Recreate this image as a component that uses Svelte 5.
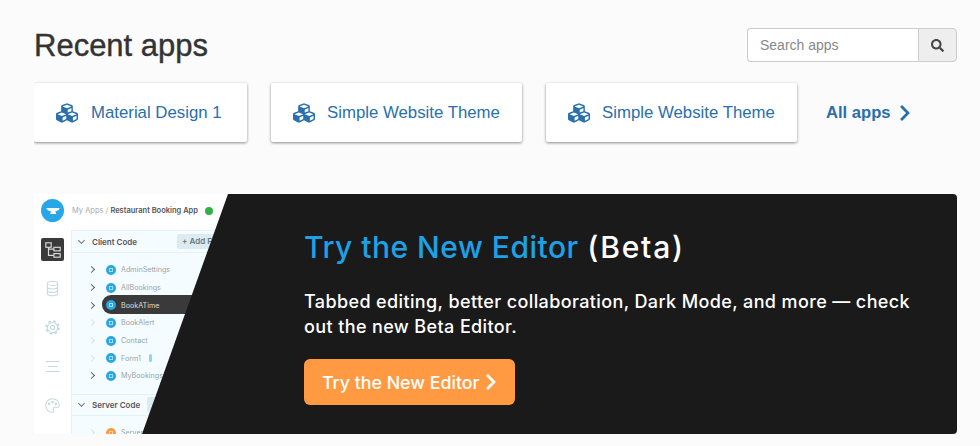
<script lang="ts">
	const apps = ['Material Design 1', 'Simple Website Theme', 'Simple Website Theme'];
	const cubes =
		'M488.6 250.2L392 214V105.5c0-15-9.3-28.4-23.4-33.7l-100-37.5c-8.1-3.1-17.1-3.1-25.3 0l-100 37.5c-14.1 5.3-23.4 18.7-23.4 33.7V214l-96.6 36.2C9.3 255.5 0 268.9 0 283.9V394c0 13.6 7.7 26.1 19.9 32.2l100 50c10.1 5.1 22.1 5.1 32.2 0l103.9-52 103.9 52c10.1 5.1 22.1 5.1 32.2 0l100-50c12.2-6.1 19.9-18.6 19.9-32.2V283.9c0-15-9.3-28.4-23.4-33.7zM358 214.8l-85 31.9v-68.2l85-37v73.3zM154 104.1l102-38.2 102 38.2v.6l-102 41.4-102-41.4v-.6zm84 291.1l-85 42.5v-79.1l85-38.8v75.4zm0-112l-102 41.4-102-41.4v-.6l102-38.2 102 38.2v.6zm240 112l-85 42.5v-79.1l85-38.8v75.4zm0-112l-102 41.4-102-41.4v-.6l102-38.2 102 38.2v.6z';
	const chevron =
		'M285.476 272.971L91.132 467.314c-9.373 9.373-24.569 9.373-33.941 0l-22.667-22.667c-9.357-9.357-9.375-24.522-.04-33.901L188.505 256 34.484 101.255c-9.335-9.379-9.317-24.544.04-33.901l22.667-22.667c9.373-9.373 24.569-9.373 33.941 0L285.475 239.03c9.373 9.372 9.373 24.568.001 33.941z';
	const search =
		'M505 442.7L405.3 343c-4.5-4.5-10.6-7-17-7H372c27.6-35.3 44-79.7 44-128C416 93.1 322.9 0 208 0S0 93.1 0 208s93.1 208 208 208c48.3 0 92.7-16.4 128-44v16.3c0 6.4 2.5 12.5 7 17l99.7 99.7c9.4 9.4 24.6 9.4 33.9 0l28.3-28.3c9.4-9.4 9.4-24.6.1-34zM208 336c-70.7 0-128-57.2-128-128 0-70.7 57.2-128 128-128 70.7 0 128 57.2 128 128 0 70.7-57.2 128-128 128z';

	const forms = [
		{ name: 'AdminSettings', arrow: true },
		{ name: 'AllBookings', arrow: true },
		{ name: 'BookATime', arrow: true, active: true },
		{ name: 'BookAlert', arrow: false },
		{ name: 'Contact', arrow: false },
		{ name: 'Form1', arrow: false, bolt: true },
		{ name: 'MyBookings', arrow: true }
	];
</script>

<div class="page">
	<header class="top">
		<h1>Recent apps</h1>
		<div class="search">
			<input type="text" placeholder="Search apps" />
			<button type="button" aria-label="Search">
				<svg viewBox="0 0 512 512" width="13" height="13"><path d={search} /></svg>
			</button>
		</div>
	</header>

	<div class="apps">
		{#each apps as app}
			<a class="card" href="#app">
				<svg class="cubes" viewBox="0 0 512 512" width="22" height="22"><path d={cubes} /></svg>
				<span>{app}</span>
			</a>
		{/each}
		<a class="all" href="#all">
			All apps
			<svg viewBox="0 0 320 512" width="12" height="18"><path d={chevron} /></svg>
		</a>
	</div>

	<section class="banner">
		<div class="mock" aria-hidden="true">
			<div class="mock-top">
				<span class="logo">
					<svg viewBox="0 0 24 24" width="18" height="18"><path d="M3 8h18c-1 3-4 4-6 4.500l1.500 3.500h-8.500l1.500-3.500C7 12 4 11 3 8z" /></svg>
				</span>
				<span class="crumb">My Apps / <b>Restaurant Booking App</b></span>
				<span class="ok"></span>
			</div>
			<div class="mock-body">
				<div class="rail">
					<span class="rail-on">
						<svg viewBox="0 0 20 20" width="18" height="18" fill="none" stroke="#d8d8d8" stroke-width="1.300">
							<rect x="2" y="2" width="6" height="5" /><rect x="11" y="7" width="7" height="4" /><rect x="11" y="14" width="7" height="4" /><path d="M5 7v9h6M5 9h6" />
						</svg>
					</span>
					<svg viewBox="0 0 20 20" width="17" height="17" fill="none" stroke="#c2d9df" stroke-width="1.200">
						<ellipse cx="10" cy="4" rx="6" ry="2.500" /><path d="M4 4v12c0 3.300 12 3.300 12 0V4M4 8c0 3.300 12 3.300 12 0M4 12c0 3.300 12 3.300 12 0" />
					</svg>
					<svg viewBox="0 0 20 20" width="17" height="17" fill="none" stroke="#c2d9df" stroke-width="1.200">
						<circle cx="10" cy="10" r="6" /><circle cx="10" cy="10" r="7.500" stroke-width="2" stroke-dasharray="3 2.900" /><circle cx="10" cy="10" r="2.500" />
					</svg>
					<svg viewBox="0 0 20 20" width="17" height="17" fill="none" stroke="#c2d9df" stroke-width="1.200">
						<path d="M2 4h16M5 10h11M2 16h16" />
					</svg>
					<svg viewBox="0 0 20 20" width="17" height="17" fill="none" stroke="#c2d9df" stroke-width="1.200">
						<path d="M10 2a8 8 0 1 0 0 16c2 0 2-2 1-3s0-3 2-3h3c2 0 2-2 2-3 0-4-4-7-8-7z" /><circle cx="6" cy="8" r="1" /><circle cx="10" cy="6" r="1" /><circle cx="14" cy="8" r="1" />
					</svg>
				</div>
				<div class="tree">
					<div class="tree-head">
						<i class="down"></i><b>Client Code</b><span class="add">+ Add Form</span>
					</div>
					<ul>
						{#each forms as form}
							<li class:active={form.active}>
								<i class="arrow" class:faint={!form.arrow}></i>
								<span class="dot"></span>
								<span class="name">{form.name}</span>
								{#if form.bolt}<span class="bolt"></span>{/if}
							</li>
						{/each}
					</ul>
					<div class="tree-head server">
						<i class="down"></i><b>Server Code</b><span class="add">+ Add</span>
					</div>
					<ul>
						<li><i class="arrow faint"></i><span class="dot orange"></span><span class="name">Server</span></li>
					</ul>
				</div>
			</div>
		</div>
		<div class="pitch">
			<h2><em>Try the New Editor</em> <span class="beta">(Beta)</span></h2>
			<p>Tabbed editing, better collaboration, Dark Mode, and more — check out the new Beta Editor.</p>
			<a class="cta" href="#editor">
				Try the New Editor
				<svg viewBox="0 0 320 512" width="12" height="18"><path d={chevron} /></svg>
			</a>
		</div>
	</section>
</div>

<style>
	:global(body) {
		background: #fbfbfb;
		font-family: 'Liberation Sans', Arial, sans-serif;
		overflow: hidden;
	}

	.page {
		display: flex;
		flex-direction: column;
		width: 923px;
		margin-left: 34px;
		height: 446px;
		overflow: hidden;
	}

	.top {
		display: flex;
		justify-content: space-between;
		align-items: flex-start;
		padding-top: 28px;
		height: 55px;
	}

	h1 {
		margin: 1px 0 0;
		font-size: 31px;
		font-weight: 400;
		line-height: 34px;
		color: #333;
		-webkit-text-stroke: 0.4px #333;
	}

	.search {
		display: flex;
		width: 210px;
		height: 34px;
		box-sizing: border-box;
	}

	.search input {
		flex: 1;
		min-width: 0;
		box-sizing: border-box;
		height: 34px;
		padding: 0 12px;
		border: 1px solid #ccc;
		border-right: 0;
		border-radius: 4px 0 0 4px;
		background: #fff;
		font: 14px 'Liberation Sans', Arial, sans-serif;
		color: #555;
	}

	.search input::placeholder {
		color: #888;
		opacity: 1;
	}

	.search button {
		width: 39px;
		height: 34px;
		box-sizing: border-box;
		display: flex;
		align-items: center;
		justify-content: center;
		padding: 0;
		border: 1px solid #ccc;
		border-radius: 0 4px 4px 0;
		background: #eee;
	}

	.search svg {
		fill: #444;
	}

	.apps {
		display: flex;
		align-items: center;
		gap: 24px;
		height: 59px;
	}

	.card {
		display: flex;
		align-items: center;
		gap: 12px;
		box-sizing: border-box;
		width: 251px;
		height: 59px;
		padding: 0 22px;
		background: #fff;
		border-radius: 2px;
		box-shadow: 0 1px 3px rgba(0, 0, 0, 0.45);
		color: #2a6fad;
		font-size: 16.800px;
		white-space: nowrap;
		text-decoration: none;
	}

	.card:first-child {
		width: 213px;
		gap: 13px;
	}

	.cubes {
		fill: #2a6fad;
		flex: none;
	}

	.all {
		display: flex;
		align-items: center;
		gap: 8px;
		margin-left: 5px;
		color: #2a6fad;
		font-size: 16.600px;
		font-weight: 700;
		text-decoration: none;
	}

	.all svg {
		fill: #2a6fad;
	}

	.banner {
		position: relative;
		display: flex;
		flex: none;
		height: 240px;
		margin-top: 52px;
		background: #1a1a1a;
		border-radius: 0 4px 4px 0;
		overflow: hidden;
	}

	/* screenshot of the editor, cut on the diagonal */
	.mock {
		position: absolute;
		inset: 0 auto 0 0;
		width: 194px;
		background: #fff;
		clip-path: polygon(0 0, 100% 0, 108px 100%, 0 100%);
		font-family: 'Inter', 'Noto Sans', sans-serif;
		color: #98a3a8;
		filter: blur(0.4px);
	}

	.mock-top {
		display: flex;
		align-items: center;
		gap: 8px;
		height: 36px;
		padding: 0 0 3px 7px;
		box-sizing: border-box;
		white-space: nowrap;
	}

	.logo {
		display: flex;
		align-items: center;
		justify-content: center;
		flex: none;
		width: 23px;
		height: 23px;
		border-radius: 50%;
		background: #27a6e8;
	}

	.logo svg {
		fill: #fff;
	}

	.crumb {
		font-size: 7.500px;
		color: #aaa;
	}

	.crumb b {
		color: #555;
		font-weight: 600;
	}

	.ok {
		flex: none;
		width: 8px;
		height: 8px;
		margin-left: -1px;
		border-radius: 50%;
		background: #2fb344;
	}

	.mock-body {
		display: flex;
		height: 204px;
	}

	.rail {
		display: flex;
		flex-direction: column;
		align-items: center;
		gap: 22px;
		flex: none;
		width: 37px;
		padding-top: 8px;
		box-sizing: border-box;
	}

	.rail svg {
		flex: none;
	}

	.rail-on {
		display: flex;
		align-items: center;
		justify-content: center;
		width: 23px;
		height: 23px;
		margin-bottom: -3px;
		border-radius: 2px;
		background: #3a3a3a;
	}

	.tree {
		flex: 1;
		min-width: 0;
		background: #f5fcff;
		border-left: 1px solid #e4f2f7;
		white-space: nowrap;
	}

	.tree-head {
		display: flex;
		align-items: center;
		gap: 7px;
		height: 21px;
		padding-left: 6px;
		border-top: 1px solid #e4f2f7;
		border-bottom: 1px solid #e4f2f7;
		font-size: 8px;
		color: #555;
	}

	.tree-head b {
		font-weight: 600;
	}

	.down {
		flex: none;
		width: 4px;
		height: 4px;
		margin: -2px 1px 0;
		border-right: 1px solid #777;
		border-bottom: 1px solid #777;
		transform: rotate(45deg);
	}

	.add {
		margin-left: 33px;
		padding: 0 5px;
		line-height: 15px;
		border-radius: 2px;
		background: #dcebf0;
		font-weight: 600;
		color: #66777f;
	}

	.server .add {
		margin-left: 0;
	}

	ul {
		list-style: none;
		margin: 0;
		padding: 8px 0 9px 17px;
	}

	li {
		position: relative;
		display: flex;
		align-items: center;
		gap: 5px;
		height: 17.700px;
		font-size: 7.200px;
	}

	li.active .name {
		color: #ddd;
	}

	li.active::before {
		content: '';
		position: absolute;
		left: 13px;
		top: -1px;
		width: 120px;
		height: 19px;
		border-radius: 9px;
		background: #3a3a3a;
	}

	.arrow {
		flex: none;
		width: 4px;
		height: 4px;
		margin-right: 7px;
		border-right: 1.200px solid #666;
		border-top: 1.200px solid #666;
		transform: rotate(45deg);
	}

	.arrow.faint {
		border-color: #d8e4e8;
	}

	.dot {
		position: relative;
		flex: none;
		width: 10px;
		height: 10px;
		border-radius: 50%;
		background: #27a6e8;
	}

	.dot::after {
		content: '';
		position: absolute;
		inset: 3px;
		border: 1px solid rgba(255, 255, 255, 0.6);
		box-sizing: border-box;
	}

	.dot.orange {
		background: #ff9a42;
	}

	.name {
		position: relative;
	}

	.bolt {
		width: 3px;
		height: 8px;
		margin-left: 3px;
		border-radius: 2px;
		background: #8fd3f4;
	}

	.server {
		height: 20px;
	}

	.pitch {
		position: relative;
		margin-left: 270px;
		padding-top: 32px;
		font-family: 'Inter', 'Noto Sans', sans-serif;
		color: #fff;
	}

	h2 {
		margin: 0;
		font-size: 30px;
		font-weight: 500;
		line-height: 42px;
		letter-spacing: 0.5px;
		white-space: nowrap;
	}

	h2 em {
		font-style: normal;
		color: #1ea1e6;
	}

	.beta {
		letter-spacing: 1.800px;
	}

	p {
		width: 612px;
		margin: 21px 0 0;
		font-size: 18px;
		font-weight: 500;
		line-height: 25px;
		letter-spacing: 0.38px;
	}

	.cta {
		display: inline-flex;
		align-items: center;
		gap: 6px;
		height: 46px;
		margin-top: 20px;
		padding: 0 18px;
		border-radius: 6px;
		background: #ff9a42;
		color: #fff;
		font-size: 17.800px;
		font-weight: 500;
		text-decoration: none;
	}

	.cta svg {
		fill: #fff;
	}
</style>
